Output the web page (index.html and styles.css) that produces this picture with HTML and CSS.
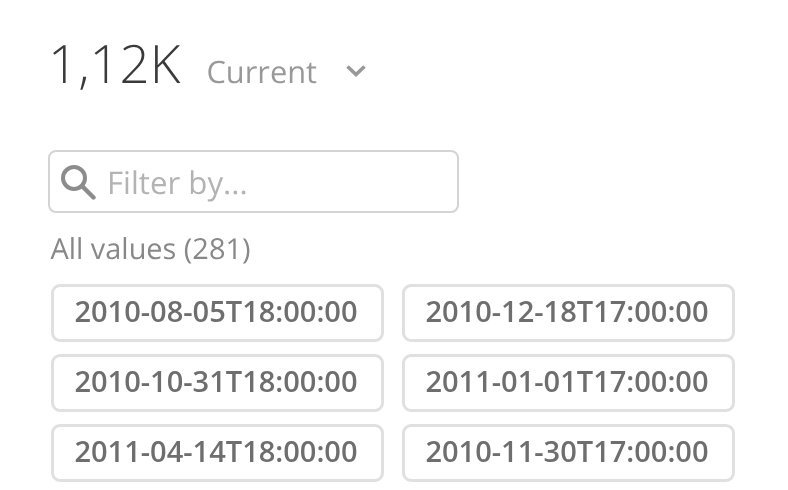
FILE: index.html
```html
<!DOCTYPE html>
<html lang="en">
<head>
<meta charset="utf-8">
<title>Filter</title>
<link rel="stylesheet" href="styles.css">
</head>
<body>
<main class="panel">
  <header class="summary">
    <span class="total">1,12K</span>
    <span class="mode">Current</span>
    <svg class="chevron" width="22" height="13" viewBox="0 0 22 13"><path d="M2.500 2.500l8.500 8 8.500-8" fill="none" stroke="#999" stroke-width="3.600"/></svg>
  </header>
  <div class="search">
    <svg class="search-icon" width="36" height="36" viewBox="0 0 36 36"><circle cx="14" cy="14" r="11" fill="none" stroke="#8c8c8c" stroke-width="4"/><path d="M22 22L33.500 33.500" fill="none" stroke="#8c8c8c" stroke-width="4.400" stroke-linecap="round"/></svg>
    <span class="placeholder">Filter by...</span>
  </div>
  <div class="count">All values (281)</div>
  <div class="values">
    <button class="value">2010-08-05T18:00:00</button>
    <button class="value">2010-12-18T17:00:00</button>
    <button class="value">2010-10-31T18:00:00</button>
    <button class="value">2011-01-01T17:00:00</button>
    <button class="value">2011-04-14T18:00:00</button>
    <button class="value">2010-11-30T17:00:00</button>
  </div>
</main>
</body>
</html>
```

FILE: styles.css
```css
* { box-sizing: border-box; }
html, body { margin: 0; height: 100%; background: #fff; overflow: hidden; }
body { font-family: "Open Sans", sans-serif; text-rendering: geometricPrecision; }
.panel { display: flex; flex-direction: column; padding: 30px 0 0 48px; width: 788px; will-change: opacity; }
.summary { display: flex; align-items: baseline; height: 68px; }
.total { font-size: 52.8px; font-weight: 300; line-height: 68px; color: #3a3a3a; }
.mode { font-size: 30.8px; color: #999; margin-left: 26px; }
.chevron { margin-left: 28px; align-self: center; margin-top: 13px; }
.search { display: flex; align-items: center; width: 411px; height: 63px; margin-top: 52px; padding-left: 10px; border: 2px solid #d4d4d4; border-radius: 8px; }
.search-icon { flex: none; }
.placeholder { font-size: 31.2px; line-height: 44px; color: #b3b3b3; margin: 2px 0 0 11px; }
.count { font-size: 28.9px; line-height: 36px; color: #888; margin: 18px 0 0 2.500px; }
.values { display: grid; grid-template-columns: 333px 333px; column-gap: 18px; row-gap: 12px; margin: 17px 0 0 3px; }
.value { height: 58px; padding: 0 3px 5px 0; background: #fff; border: 3px solid #e0e0e0; border-radius: 9px; font-family: inherit; font-size: 29px; font-weight: 550; color: #6e6e6e; }
```
